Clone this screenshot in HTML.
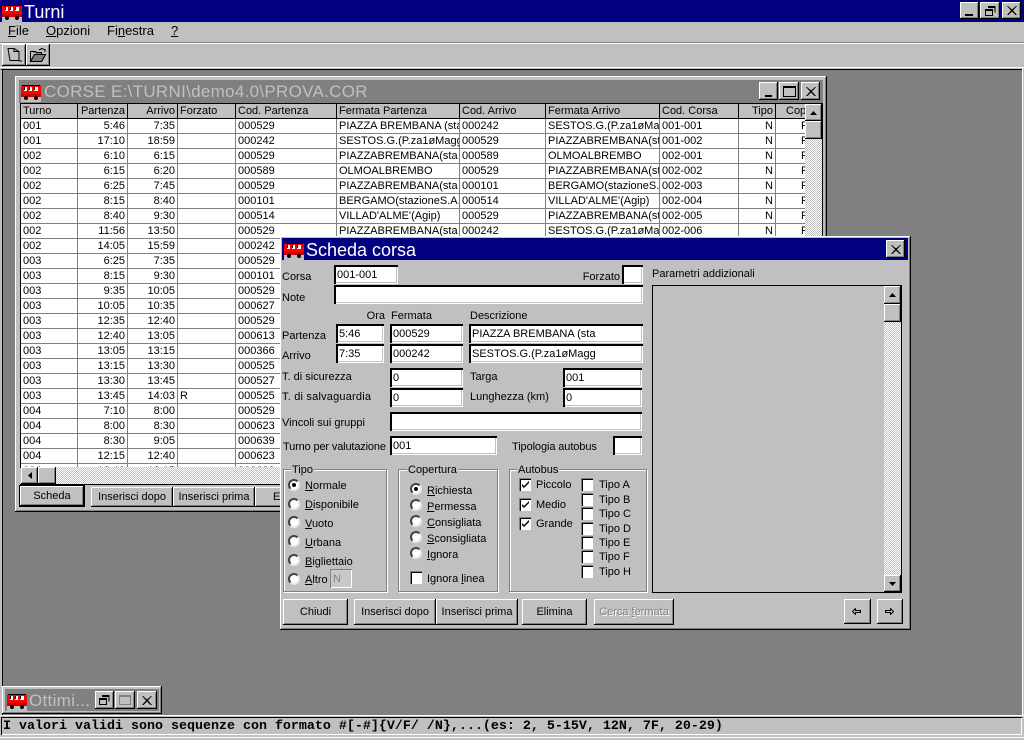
<!DOCTYPE html>
<html><head><meta charset="utf-8"><title>Turni</title>
<style>
html,body{margin:0;padding:0;width:1024px;height:740px;overflow:hidden;background:#c0c0c0}
body{position:relative;font:11px/14px "Liberation Sans",sans-serif;color:#000}
div,span.a{position:absolute;box-sizing:border-box}
.t{white-space:nowrap;height:14px;line-height:14px}
.r{text-align:right}
.b{background:#c0c0c0;box-shadow:inset -1px -1px #000,inset 1px 1px #fff,inset -2px -2px #808080;text-align:center;white-space:nowrap;font-size:11px;display:flex;align-items:center;justify-content:center}
.e{background:#fff;box-shadow:inset 2px 2px #000,inset -1px -1px #fff,inset -2px -2px #c0c0c0;padding:3px 0 0 3px;line-height:14px;white-space:nowrap;overflow:hidden}
.g{border:1px solid #808080;box-shadow:1px 1px #fff,inset 1px 1px #fff}
.gl{background:#c0c0c0;padding:0 1px;top:-6px;height:13px;line-height:13px}
.ra{width:12px;height:12px;border-radius:50%;background:#fff;border:2px solid;border-color:#404040 #e8e8e8 #e8e8e8 #404040}
.ra i{position:absolute;left:2px;top:2px;width:4px;height:4px;border-radius:50%;background:#000}
.c{width:12px;height:13px;background:#fff;box-shadow:inset 1px 1px #808080,inset 2px 2px #000,inset -1px -1px #fff}
.c svg{position:absolute;left:0;top:0}
.ck{background:repeating-conic-gradient(#c0c0c0 0 25%,#fff 0 50%) 0 0/2px 2px}
svg{display:block}
table{border-collapse:separate;border-spacing:0;table-layout:fixed;background:#fff}
td,th{padding:0 2px;height:15px;box-sizing:border-box;overflow:hidden;white-space:nowrap;font-weight:normal;font-size:11px;line-height:14px;border-right:1px solid #808080;border-bottom:1px solid #808080;text-align:left}
th{background:#c0c0c0;border-right:1px solid #000;border-bottom:1px solid #000;height:14px}
.n{text-align:right}
</style></head><body>
<svg width="0" height="0" style="position:absolute"><defs>
<symbol id="bus" viewBox="0 0 20 19"><rect x="0" y="2" width="20" height="12" rx="2" fill="#f00"/><path d="M1 2h18v1H1z" fill="#000"/><path d="M3 4h3v4H3zM8 4h3v4H8zM13 4h4v4h-4z" fill="#fff"/><path d="M3 4h1v3H3zM8 4h1v3H8zM13 4h1v3h-1z" fill="#000"/><rect x="0" y="14" width="20" height="5" fill="#c0c0c0"/><rect x="0" y="11" width="20" height="3" fill="#d00000"/><circle cx="5" cy="15" r="2" fill="#000"/><circle cx="15" cy="15" r="2" fill="#000"/></symbol>
<symbol id="close" viewBox="0 0 10 9"><path d="M1 0l4 3.500L9 0h1L6 4.500 10 9H8.500L5 5.500 1.500 9H0l4-4.500L0 0z" fill="#000"/></symbol>
<symbol id="chk" viewBox="0 0 13 13"><path d="M3 6l2 2 5-5v2l-5 5-2-2z" fill="#000"/></symbol>
<symbol id="rest" viewBox="0 0 11 10"><path d="M3 .5h7v6M.5 3.500h7v6h-7z M3 1.500h7M.5 4.500h7" fill="none" stroke="#000"/></symbol>
</defs></svg>

<!-- main title -->
<div style="left:0;top:0;width:1024px;height:22px;background:#000080"></div>
<svg style="position:absolute;left:2px;top:3px" width="20" height="19"><use href="#bus"/></svg>
<div class="t" style="left:24px;top:2px;height:20px;line-height:20px;font-size:18px;color:#fff">Turni</div>
<div class="b" style="left:960px;top:2px;width:19px;height:17px"><svg width="8" height="2" style="margin-top:9px;margin-right:1px"><rect width="8" height="2"/></svg></div>
<div class="b" style="left:980px;top:2px;width:20px;height:17px"><svg width="11" height="10"><use href="#rest"/></svg></div>
<div class="b" style="left:1002px;top:2px;width:19px;height:17px"><svg width="10" height="9"><use href="#close"/></svg></div>

<!-- menu -->
<div class="t" style="left:8px;top:24px;font-size:13px"><u>F</u>ile</div>
<div class="t" style="left:46px;top:24px;font-size:13px"><u>O</u>pzioni</div>
<div class="t" style="left:107px;top:24px;font-size:13px">Fi<u>n</u>estra</div>
<div class="t" style="left:171px;top:24px;font-size:13px"><u>?</u></div>
<div style="left:0;top:42px;width:1024px;height:1px;background:#808080"></div>
<div style="left:0;top:43px;width:1024px;height:1px;background:#fff"></div>

<!-- toolbar -->
<div class="b" style="left:2px;top:44px;width:24px;height:22px"><svg width="16" height="16"><path d="M2 1.500h6l5 3v9H4z" fill="#c0c0c0" stroke="#000"/><path d="M8 1.500v3h5M13 14h3" fill="none" stroke="#000"/></svg></div>
<div class="b" style="left:26px;top:44px;width:24px;height:22px"><svg width="18" height="15"><path d="M1.500 3.500h5l1 1h5v3M1.500 3.500v10h11l4-7h-11l-4 7" fill="#808080" stroke="#000"/><path d="M5.500 6.500h11l-4 7h-11z" fill="#808080" stroke="#000"/><path d="M10 2l3-1.500 3 1.500M16 1v3" fill="none" stroke="#000"/></svg></div>

<!-- MDI -->
<div style="left:0;top:67px;width:1024px;height:1px;background:#fff"></div>
<div style="left:0;top:69px;width:1022px;height:646px;background:#808080;border-top:1px solid #000;border-left:2px solid #c0c0c0;box-shadow:inset 1px 0 #000"></div>
<div style="left:1022px;top:68px;width:1px;height:648px;background:#fff"></div>

<!-- CORSE window -->
<div style="left:15px;top:76px;width:812px;height:436px;background:#c0c0c0;box-shadow:inset -1px -1px #000,inset 1px 1px #fff,inset -2px -2px #808080">
</div>
<div style="left:19px;top:80px;width:804px;height:23px;background:#808080"></div>
<svg style="position:absolute;left:21px;top:83px" width="20" height="19"><use href="#bus"/></svg>
<div class="t" style="left:44px;top:82px;height:20px;line-height:20px;font-size:17px;color:#c0c0c0;letter-spacing:.3px">CORSE E:\TURNI\demo4.0\PROVA.COR</div>
<div class="b" style="left:759px;top:82px;width:19px;height:18px"><svg width="7" height="2" style="margin-top:9px"><rect width="7" height="2"/></svg></div>
<div class="b" style="left:779px;top:82px;width:20px;height:18px"><svg width="13" height="11"><rect x=".5" y=".5" width="12" height="10" fill="none" stroke="#000"/><rect x="1" y="1" width="11" height="1"/></svg></div>
<div class="b" style="left:801px;top:82px;width:19px;height:18px"><svg width="10" height="9"><use href="#close"/></svg></div>

<div style="left:20px;top:103px;width:803px;height:365px;background:#000"></div>
<div style="left:21px;top:104px;width:784px;height:363px;overflow:hidden;background:#fff">
<table style="width:795px">
<colgroup><col style="width:57px"><col style="width:50px"><col style="width:50px"><col style="width:58px"><col style="width:101px"><col style="width:123px"><col style="width:86px"><col style="width:114px"><col style="width:79px"><col style="width:37px"><col style="width:40px"></colgroup>
<tr><th>Turno</th><th class="n">Partenza</th><th class="n">Arrivo</th><th>Forzato</th><th>Cod. Partenza</th><th>Fermata Partenza</th><th>Cod. Arrivo</th><th>Fermata Arrivo</th><th>Cod. Corsa</th><th class="n">Tipo</th><th style="padding-left:10px">Cop</th></tr>
<tr><td>001</td><td class="n">5:46</td><td class="n">7:35</td><td></td><td>000529</td><td>PIAZZA BREMBANA (sta</td><td>000242</td><td>SESTOS.G.(P.za1øMagg</td><td>001-001</td><td class="n">N</td><td style="padding-left:25px">F</td></tr>
<tr><td>001</td><td class="n">17:10</td><td class="n">18:59</td><td></td><td>000242</td><td>SESTOS.G.(P.za1øMagg</td><td>000529</td><td>PIAZZABREMBANA(sta</td><td>001-002</td><td class="n">N</td><td style="padding-left:25px">F</td></tr>
<tr><td>002</td><td class="n">6:10</td><td class="n">6:15</td><td></td><td>000529</td><td>PIAZZABREMBANA(sta</td><td>000589</td><td>OLMOALBREMBO</td><td>002-001</td><td class="n">N</td><td style="padding-left:25px">F</td></tr>
<tr><td>002</td><td class="n">6:15</td><td class="n">6:20</td><td></td><td>000589</td><td>OLMOALBREMBO</td><td>000529</td><td>PIAZZABREMBANA(sta</td><td>002-002</td><td class="n">N</td><td style="padding-left:25px">F</td></tr>
<tr><td>002</td><td class="n">6:25</td><td class="n">7:45</td><td></td><td>000529</td><td>PIAZZABREMBANA(sta</td><td>000101</td><td>BERGAMO(stazioneS.A.</td><td>002-003</td><td class="n">N</td><td style="padding-left:25px">F</td></tr>
<tr><td>002</td><td class="n">8:15</td><td class="n">8:40</td><td></td><td>000101</td><td>BERGAMO(stazioneS.A.</td><td>000514</td><td>VILLAD'ALME'(Agip)</td><td>002-004</td><td class="n">N</td><td style="padding-left:25px">F</td></tr>
<tr><td>002</td><td class="n">8:40</td><td class="n">9:30</td><td></td><td>000514</td><td>VILLAD'ALME'(Agip)</td><td>000529</td><td>PIAZZABREMBANA(sta</td><td>002-005</td><td class="n">N</td><td style="padding-left:25px">F</td></tr>
<tr><td>002</td><td class="n">11:56</td><td class="n">13:50</td><td></td><td>000529</td><td>PIAZZABREMBANA(sta</td><td>000242</td><td>SESTOS.G.(P.za1øMagg</td><td>002-006</td><td class="n">N</td><td style="padding-left:25px">F</td></tr>
<tr><td>002</td><td class="n">14:05</td><td class="n">15:59</td><td></td><td>000242</td><td>SESTOS.G.(P.za1øMagg</td><td>000529</td><td>PIAZZABREMBANA(sta</td><td>002-007</td><td class="n">N</td><td style="padding-left:25px">F</td></tr>
<tr><td>003</td><td class="n">6:25</td><td class="n">7:35</td><td></td><td>000529</td><td></td><td></td><td></td><td></td><td></td><td></td></tr>
<tr><td>003</td><td class="n">8:15</td><td class="n">9:30</td><td></td><td>000101</td><td></td><td></td><td></td><td></td><td></td><td></td></tr>
<tr><td>003</td><td class="n">9:35</td><td class="n">10:05</td><td></td><td>000529</td><td></td><td></td><td></td><td></td><td></td><td></td></tr>
<tr><td>003</td><td class="n">10:05</td><td class="n">10:35</td><td></td><td>000627</td><td></td><td></td><td></td><td></td><td></td><td></td></tr>
<tr><td>003</td><td class="n">12:35</td><td class="n">12:40</td><td></td><td>000529</td><td></td><td></td><td></td><td></td><td></td><td></td></tr>
<tr><td>003</td><td class="n">12:40</td><td class="n">13:05</td><td></td><td>000613</td><td></td><td></td><td></td><td></td><td></td><td></td></tr>
<tr><td>003</td><td class="n">13:05</td><td class="n">13:15</td><td></td><td>000366</td><td></td><td></td><td></td><td></td><td></td><td></td></tr>
<tr><td>003</td><td class="n">13:15</td><td class="n">13:30</td><td></td><td>000525</td><td></td><td></td><td></td><td></td><td></td><td></td></tr>
<tr><td>003</td><td class="n">13:30</td><td class="n">13:45</td><td></td><td>000527</td><td></td><td></td><td></td><td></td><td></td><td></td></tr>
<tr><td>003</td><td class="n">13:45</td><td class="n">14:03</td><td>R</td><td>000525</td><td></td><td></td><td></td><td></td><td></td><td></td></tr>
<tr><td>004</td><td class="n">7:10</td><td class="n">8:00</td><td></td><td>000529</td><td></td><td></td><td></td><td></td><td></td><td></td></tr>
<tr><td>004</td><td class="n">8:00</td><td class="n">8:30</td><td></td><td>000623</td><td></td><td></td><td></td><td></td><td></td><td></td></tr>
<tr><td>004</td><td class="n">8:30</td><td class="n">9:05</td><td></td><td>000639</td><td></td><td></td><td></td><td></td><td></td><td></td></tr>
<tr><td>004</td><td class="n">12:15</td><td class="n">12:40</td><td></td><td>000623</td><td></td><td></td><td></td><td></td><td></td><td></td></tr>
<tr><td>004</td><td class="n">12:40</td><td class="n">13:15</td><td></td><td>000639</td><td></td><td></td><td></td><td></td><td></td><td></td></tr>
</table>
</div>
<!-- list v scrollbar -->
<div class="ck" style="left:805px;top:104px;width:17px;height:363px"></div>
<div class="b" style="left:805px;top:104px;width:17px;height:17px"><svg width="7" height="4"><path d="M3.500 0L7 4H0z"/></svg></div>
<div class="b" style="left:805px;top:121px;width:17px;height:18px"></div>
<!-- list h scrollbar -->
<div class="ck" style="left:21px;top:467px;width:801px;height:17px"></div>
<div class="b" style="left:21px;top:467px;width:17px;height:17px"><svg width="4" height="7"><path d="M0 3.500L4 0v7z"/></svg></div>
<div class="b" style="left:38px;top:467px;width:18px;height:17px"></div>
<div style="left:20px;top:484px;width:802px;height:1px;background:#000"></div>
<!-- list buttons -->
<div class="b" style="left:19px;top:485px;width:66px;height:22px;box-shadow:inset 0 0 0 1px #000,inset -2px -2px #000,inset 2px 2px #fff,inset -3px -3px #808080">Scheda</div>
<div class="b" style="left:91px;top:487px;width:82px;height:20px">Inserisci dopo</div>
<div class="b" style="left:173px;top:487px;width:82px;height:20px">Inserisci prima</div>
<div class="b" style="left:255px;top:487px;width:72px;height:20px">Elimina</div>

<!-- minimized window -->
<div style="left:2px;top:686px;width:160px;height:28px;background:#c0c0c0;box-shadow:inset -1px -1px #000,inset 1px 1px #fff,inset -2px -2px #808080"></div>
<div style="left:5px;top:689px;width:154px;height:22px;background:#808080"></div>
<svg style="position:absolute;left:7px;top:692px" width="20" height="19"><use href="#bus"/></svg>
<div class="t" style="left:29px;top:691px;height:20px;line-height:20px;font-size:17px;color:#c0c0c0;letter-spacing:.3px">Ottimi...</div>
<div class="b" style="left:95px;top:691px;width:19px;height:18px"><svg width="11" height="10"><use href="#rest"/></svg></div>
<div class="b" style="left:115px;top:691px;width:20px;height:18px"><svg width="12" height="10"><rect x=".5" y=".5" width="11" height="9" fill="#c0c0c0" stroke="#808080"/><rect x="1" y="1" width="10" height="1" fill="#808080"/></svg></div>
<div class="b" style="left:137px;top:691px;width:20px;height:18px"><svg width="10" height="9"><use href="#close"/></svg></div>

<!-- status bar -->
<div style="left:0;top:715px;width:1024px;height:1px;background:#fff"></div>
<div style="left:1px;top:717px;width:1021px;height:18px;background:#c0c0c0;box-shadow:inset 1px 1px #000,inset -1px -1px #fff"></div>
<div class="t" style="left:3px;top:719px;height:16px;line-height:16px;font:bold 13.33px/16px 'Liberation Mono',monospace">I valori validi sono sequenze con formato #[-#]{V/F/ /N},...(es: 2, 5-15V, 12N, 7F, 20-29)</div>
<div style="left:0;top:737px;width:1024px;height:1px;background:#fff"></div>

<!-- dialog -->
<div style="left:280px;top:236px;width:631px;height:394px;background:#c0c0c0;box-shadow:inset -1px -1px #000,inset 1px 1px #fff,inset -2px -2px #808080"></div>
<div style="left:282px;top:238px;width:626px;height:22px;background:#000080"></div>
<svg style="position:absolute;left:284px;top:241px" width="20" height="19"><use href="#bus"/></svg>
<div class="t" style="left:306px;top:240px;height:20px;line-height:20px;font-size:18px;color:#fff">Scheda corsa</div>
<div class="b" style="left:886px;top:240px;width:19px;height:18px"><svg width="10" height="9"><use href="#close"/></svg></div>

<div class="t" style="left:282px;top:270px">Corsa</div>
<div class="e" style="left:334px;top:265px;width:64px;height:19px">001-001</div>
<div class="t r" style="left:560px;top:270px;width:60px">Forzato</div>
<div class="e" style="left:622px;top:265px;width:21px;height:19px"></div>
<div class="t" style="left:282px;top:291px">Note</div>
<div class="e" style="left:334px;top:285px;width:309px;height:19px"></div>
<div class="t r" style="left:345px;top:309px;width:40px">Ora</div>
<div class="t" style="left:391px;top:309px">Fermata</div>
<div class="t" style="left:470px;top:309px">Descrizione</div>
<div class="t" style="left:282px;top:329px">Partenza</div>
<div class="e" style="left:336px;top:324px;width:48px;height:19px">5:46</div>
<div class="e" style="left:390px;top:324px;width:73px;height:19px">000529</div>
<div class="e" style="left:469px;top:324px;width:174px;height:19px">PIAZZA BREMBANA (sta</div>
<div class="t" style="left:282px;top:349px">Arrivo</div>
<div class="e" style="left:336px;top:344px;width:48px;height:19px">7:35</div>
<div class="e" style="left:390px;top:344px;width:73px;height:19px">000242</div>
<div class="e" style="left:469px;top:344px;width:174px;height:19px">SESTOS.G.(P.za1øMagg</div>
<div class="t" style="left:282px;top:370px">T. di sicurezza</div>
<div class="e" style="left:390px;top:368px;width:73px;height:19px">0</div>
<div class="t" style="left:470px;top:370px">Targa</div>
<div class="e" style="left:563px;top:368px;width:79px;height:19px">001</div>
<div class="t" style="left:282px;top:390px;letter-spacing:.2px">T. di salvaguardia</div>
<div class="e" style="left:390px;top:388px;width:73px;height:19px">0</div>
<div class="t" style="left:470px;top:390px">Lunghezza (km)</div>
<div class="e" style="left:563px;top:388px;width:79px;height:19px">0</div>
<div class="t" style="left:282px;top:416px">Vincoli sui gruppi</div>
<div class="e" style="left:390px;top:412px;width:252px;height:19px"></div>
<div class="t" style="left:283px;top:440px;letter-spacing:-.15px">Turno per valutazione</div>
<div class="e" style="left:390px;top:436px;width:107px;height:19px">001</div>
<div class="t" style="left:512px;top:440px;letter-spacing:-.1px">Tipologia autobus</div>
<div class="e" style="left:613px;top:436px;width:29px;height:19px"></div>

<!-- Tipo -->
<div class="g" style="left:283px;top:469px;width:104px;height:123px"><div class="gl t" style="left:7px">Tipo</div></div>
<div class="ra" style="left:288px;top:479px"><i></i></div><div class="t" style="left:305px;top:479px"><u>N</u>ormale</div>
<div class="ra" style="left:288px;top:498px"></div><div class="t" style="left:305px;top:498px"><u>D</u>isponibile</div>
<div class="ra" style="left:288px;top:516px"></div><div class="t" style="left:305px;top:517px"><u>V</u>uoto</div>
<div class="ra" style="left:288px;top:535px"></div><div class="t" style="left:305px;top:536px"><u>U</u>rbana</div>
<div class="ra" style="left:288px;top:554px"></div><div class="t" style="left:305px;top:555px"><u>B</u>igliettaio</div>
<div class="ra" style="left:288px;top:573px"></div><div class="t" style="left:305px;top:573px"><u>A</u>ltro</div>
<div class="e" style="left:330px;top:569px;width:22px;height:19px;background:#c8c8c8;color:#808080;box-shadow:inset 1px 1px #808080,inset -1px -1px #fff">N</div>

<!-- Copertura -->
<div class="g" style="left:398px;top:469px;width:100px;height:123px"><div class="gl t" style="left:8px">Copertura</div></div>
<div class="ra" style="left:410px;top:483px"><i></i></div><div class="t" style="left:427px;top:484px"><u>R</u>ichiesta</div>
<div class="ra" style="left:410px;top:499px"></div><div class="t" style="left:427px;top:500px"><u>P</u>ermessa</div>
<div class="ra" style="left:410px;top:515px"></div><div class="t" style="left:427px;top:516px"><u>C</u>onsigliata</div>
<div class="ra" style="left:410px;top:531px"></div><div class="t" style="left:427px;top:532px"><u>S</u>consigliata</div>
<div class="ra" style="left:410px;top:547px"></div><div class="t" style="left:427px;top:548px"><u>I</u>gnora</div>
<div class="c" style="left:410px;top:571px"></div><div class="t" style="left:427px;top:572px">Ignora <u>l</u>inea</div>

<!-- Autobus -->
<div class="g" style="left:509px;top:469px;width:138px;height:123px"><div class="gl t" style="left:7px">Autobus</div></div>
<div class="c" style="left:519px;top:478px"><svg width="13" height="13"><use href="#chk"/></svg></div><div class="t" style="left:536px;top:478px">Piccolo</div>
<div class="c" style="left:519px;top:498px"><svg width="13" height="13"><use href="#chk"/></svg></div><div class="t" style="left:536px;top:498px">Medio</div>
<div class="c" style="left:519px;top:517px"><svg width="13" height="13"><use href="#chk"/></svg></div><div class="t" style="left:536px;top:517px">Grande</div>
<div class="c" style="left:581px;top:478px"></div><div class="t" style="left:599px;top:478px">Tipo A</div>
<div class="c" style="left:581px;top:493px"></div><div class="t" style="left:599px;top:493px">Tipo B</div>
<div class="c" style="left:581px;top:507px"></div><div class="t" style="left:599px;top:507px">Tipo C</div>
<div class="c" style="left:581px;top:522px"></div><div class="t" style="left:599px;top:522px">Tipo D</div>
<div class="c" style="left:581px;top:536px"></div><div class="t" style="left:599px;top:536px">Tipo E</div>
<div class="c" style="left:581px;top:550px"></div><div class="t" style="left:599px;top:550px">Tipo F</div>
<div class="c" style="left:581px;top:565px"></div><div class="t" style="left:599px;top:565px">Tipo H</div>

<!-- buttons -->
<div class="b" style="left:283px;top:599px;width:65px;height:26px">Chiudi</div>
<div class="b" style="left:354px;top:599px;width:82px;height:26px">Inserisci dopo</div>
<div class="b" style="left:436px;top:599px;width:82px;height:26px">Inserisci prima</div>
<div class="b" style="left:522px;top:599px;width:65px;height:26px">Elimina</div>
<div class="b" style="left:594px;top:599px;width:80px;height:26px;color:#808080;text-shadow:1px 1px #fff"><span>Cerca <u>f</u>ermata</span></div>
<div class="b" style="left:844px;top:599px;width:27px;height:25px"><svg width="9" height="7" style="margin-right:2px"><path d="M.5 3.500L3.500 .5v2h5v2h-5v2z" fill="none" stroke="#000"/></svg></div>
<div class="b" style="left:877px;top:599px;width:26px;height:25px"><svg width="9" height="7" style="margin-right:2px"><path d="M8.500 3.500L5.500 .5v2h-5v2h5v2z" fill="none" stroke="#000"/></svg></div>

<!-- parametri -->
<div class="t" style="left:652px;top:267px">Parametri addizionali</div>
<div style="left:652px;top:285px;width:250px;height:308px;border:1px solid #000;background:#c0c0c0"></div>
<div class="ck" style="left:884px;top:286px;width:17px;height:306px"></div>
<div class="b" style="left:884px;top:286px;width:17px;height:18px"><svg width="7" height="4"><path d="M3.500 0L7 4H0z"/></svg></div>
<div class="b" style="left:884px;top:304px;width:17px;height:18px"></div>
<div class="b" style="left:884px;top:575px;width:17px;height:17px"><svg width="7" height="4"><path d="M3.500 4L7 0H0z"/></svg></div>
</body></html>
